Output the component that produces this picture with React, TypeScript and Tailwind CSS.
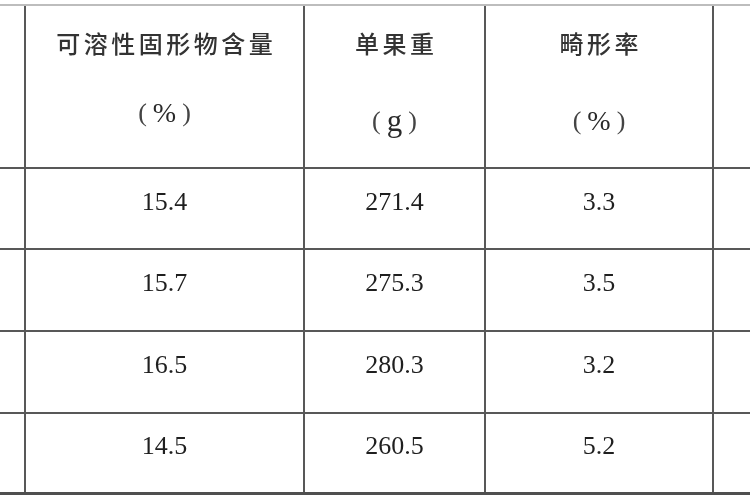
export default function App() {
  const rows = [
    ["15.4", "271.4", "3.3"],
    ["15.7", "275.3", "3.5"],
    ["16.5", "280.3", "3.2"],
    ["14.5", "260.5", "5.2"],
  ];
  const cjk = { fontFamily: '"Noto Sans CJK SC", sans-serif' };
  const serif = { fontFamily: '"Liberation Serif", serif' };
  const Unit = ({ u, mt, size }: { u: string; mt: string; size: string }) => (
    <div className={`${mt} h-[30px] leading-[30px] flex items-center text-[#2a2a2a]`} style={serif}>
      <span className="text-[26px] text-[#444]">(</span>
      <span className={`${size} mx-[6px]`}>{u}</span>
      <span className="text-[26px] text-[#444]">)</span>
    </div>
  );
  return (
    <div className="w-[750px] h-[500px] bg-white overflow-hidden pt-[4px] blur-[0.4px]">
      <div className="border-t-2 border-t-[#bdbdbd] border-b-[3px] border-b-[#4f4f4f]">
        <div className="grid grid-cols-[24px_277px_179px_226px_1fr] grid-rows-[161px_79px_80px_80px_78px] gap-[2px] bg-[#585858]">
          <div className="bg-white" />
          <div className="bg-white flex flex-col items-center pt-[22px]">
            <div className="h-[30px] leading-[30px] text-[24px] font-medium tracking-[3.5px] pl-[3.5px] text-[#333]" style={cjk}>
              可溶性固形物含量
            </div>
            <Unit u="%" mt="mt-[40px]" size="text-[28px]" />
          </div>
          <div className="bg-white flex flex-col items-center pt-[22px]">
            <div className="h-[30px] leading-[30px] text-[24px] font-medium tracking-[3.5px] pl-[3.5px] text-[#333]" style={cjk}>
              单果重
            </div>
            <Unit u="g" mt="mt-[48px]" size="text-[31px]" />
          </div>
          <div className="bg-white flex flex-col items-center pt-[22px]">
            <div className="h-[30px] leading-[30px] text-[24px] font-medium tracking-[3.5px] pl-[3.5px] text-[#333]" style={cjk}>
              畸形率
            </div>
            <Unit u="%" mt="mt-[48px]" size="text-[28px]" />
          </div>
          <div className="bg-white" />
          {rows.map((r, i) => (
            <>
              <div key={`a${i}`} className="bg-white" />
              {r.map((v, j) => (
                <div
                  key={`${i}-${j}`}
                  className="bg-white flex items-center justify-center pb-[14px] text-[26px] leading-[26px] text-[#1f1f1f]"
                  style={serif}
                >
                  {v}
                </div>
              ))}
              <div key={`b${i}`} className="bg-white" />
            </>
          ))}
        </div>
      </div>
    </div>
  );
}
